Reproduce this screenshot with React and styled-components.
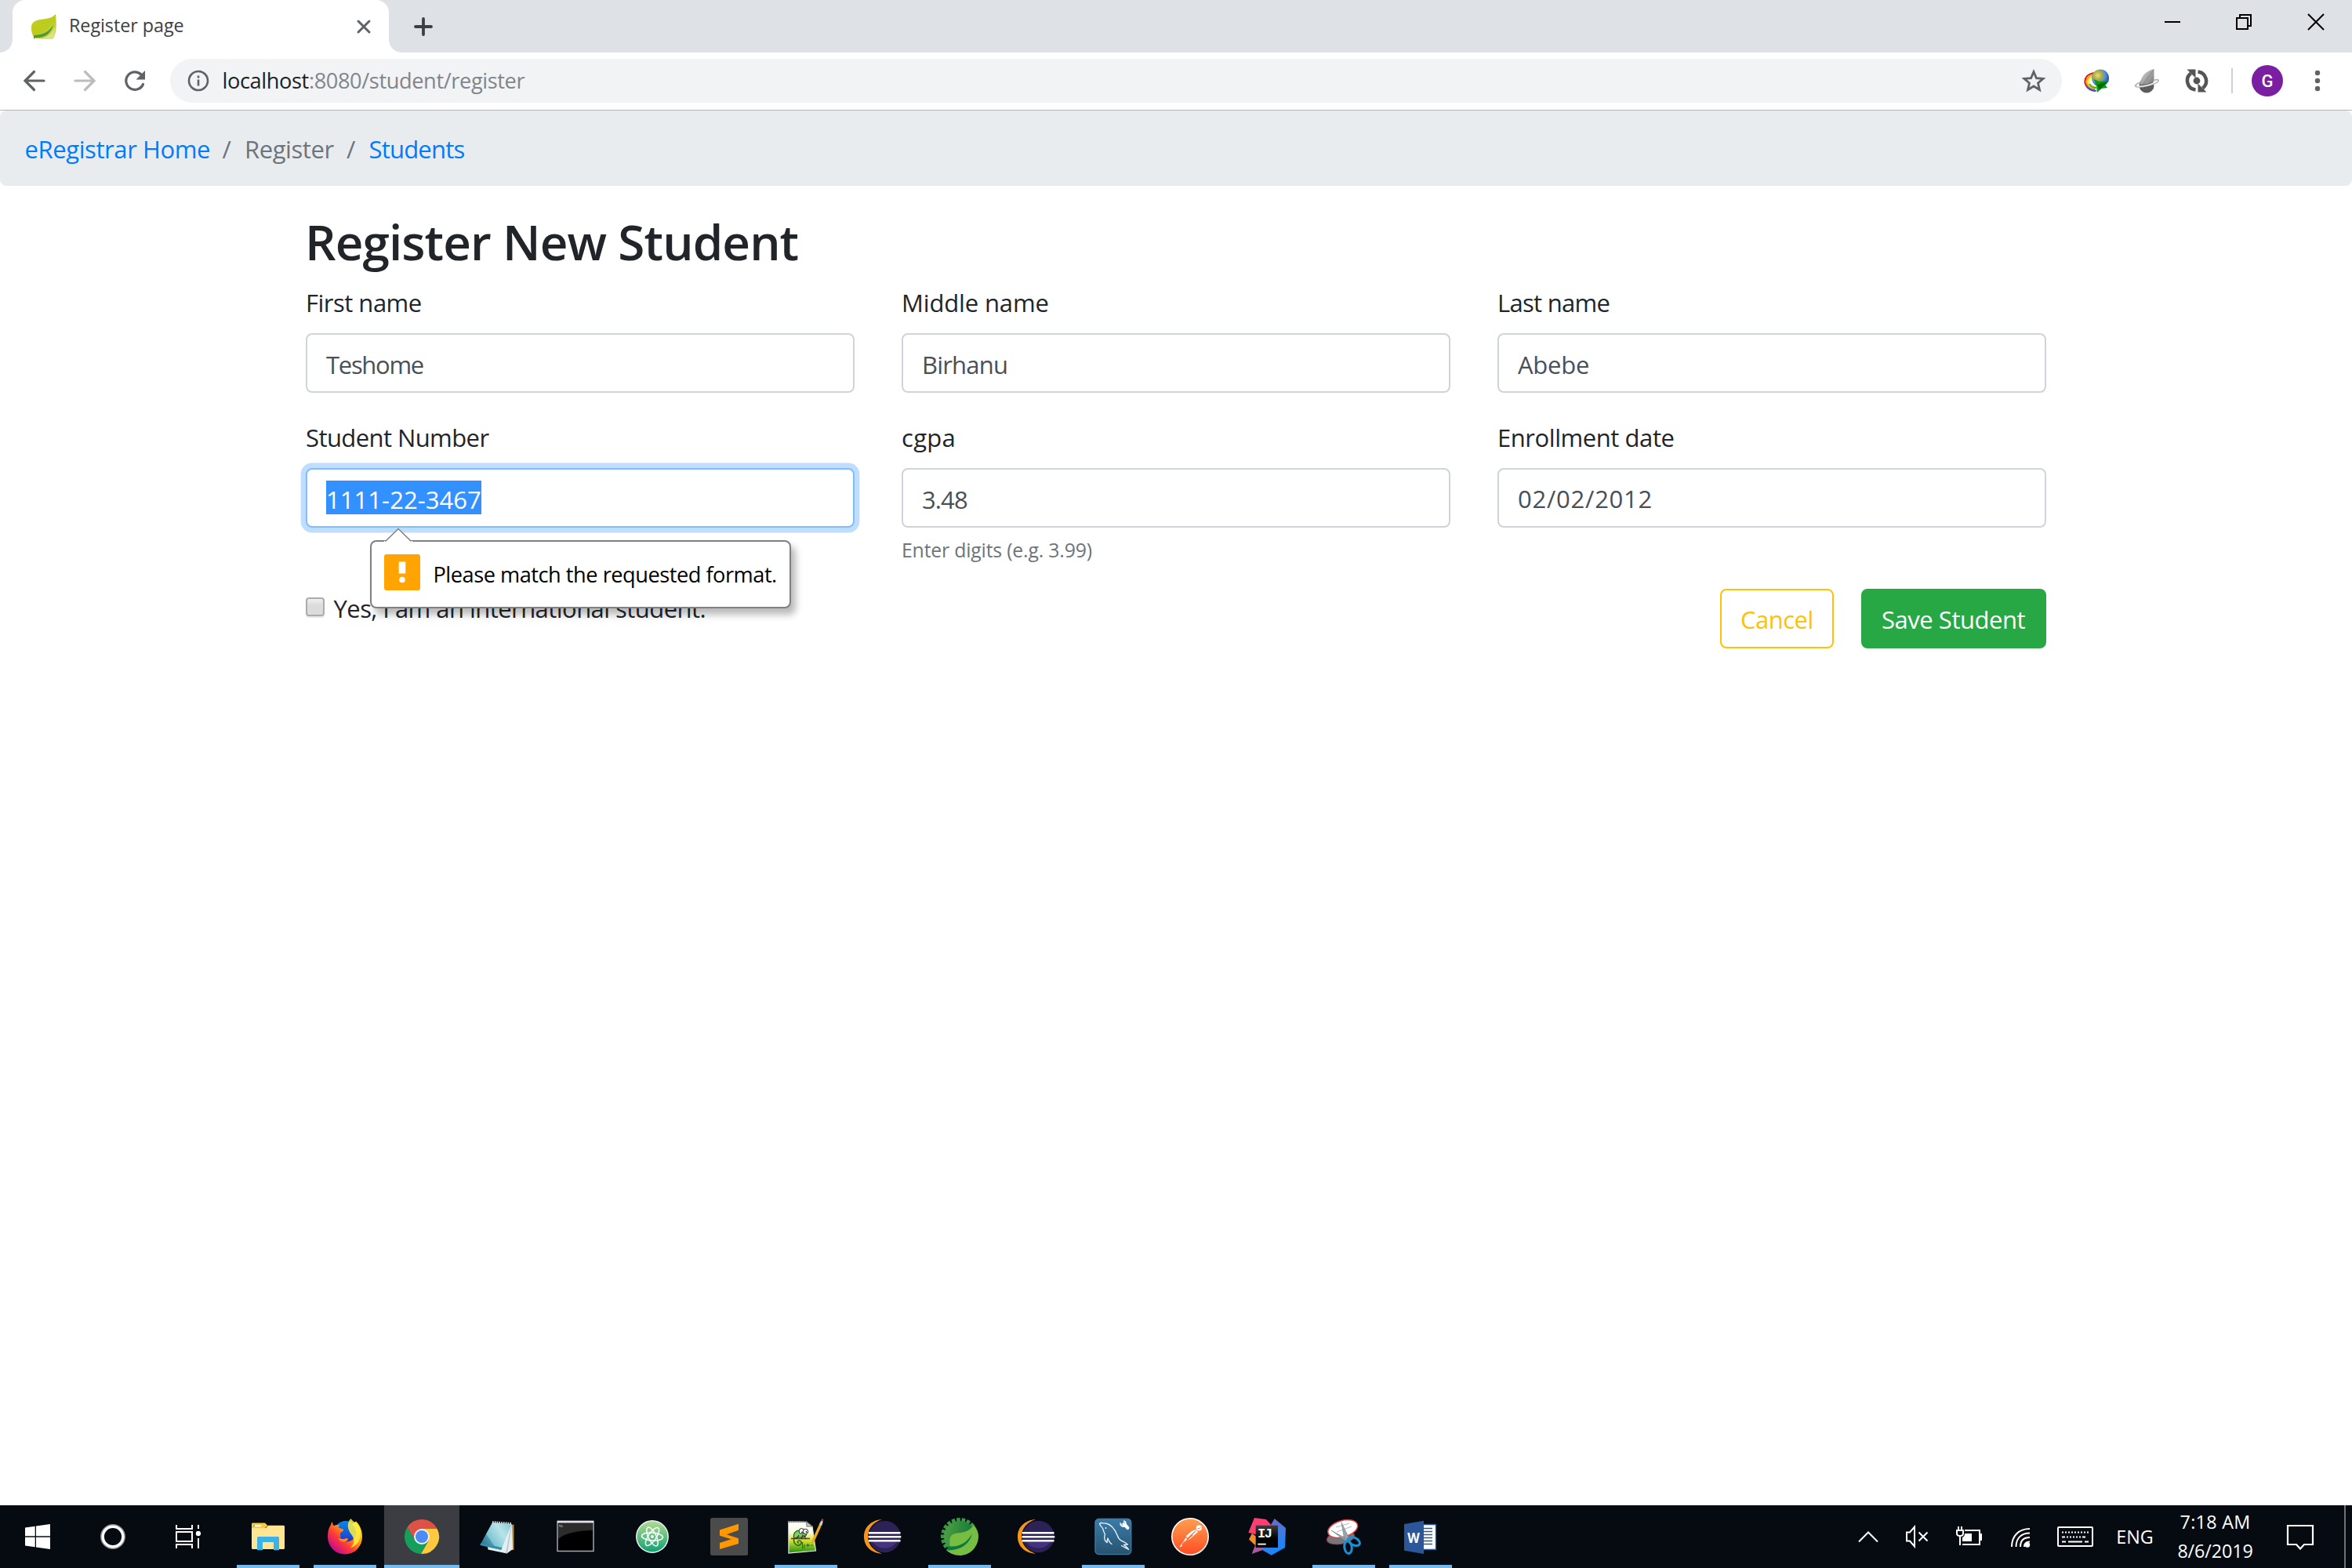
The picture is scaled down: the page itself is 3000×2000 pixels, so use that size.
import React from 'react';
import styled, { createGlobalStyle, css } from 'styled-components';

const GlobalStyle = createGlobalStyle`
  *, *::before, *::after { box-sizing: border-box; }
  body {
    margin: 0;
    background: #fff;
    font-family: "Open Sans", "Noto Sans", sans-serif;
    font-size: 31px;
    color: #212529;
  }
  svg { display: block; flex: none; }
`;

const tracking = css`letter-spacing: ${(p) => p.$ls || 0}px;`;

const Window = styled.div`
  width: 3000px;
  height: 2000px;
  display: flex;
  flex-direction: column;
  overflow: hidden;
  white-space: nowrap;
`;

/* ---------- tab strip ---------- */
const TabStrip = styled.header`
  display: flex;
  flex: none;
  height: 67px;
  padding-left: 16px;
  background: #dee1e6;
`;

const Tab = styled.div`
  position: relative;
  display: flex;
  align-items: center;
  width: 480px;
  height: 67px;
  padding: 0 22px 0 23px;
  background: #fff;
  border-radius: 16px 16px 0 0;
  &::before, &::after {
    content: "";
    position: absolute;
    bottom: 0;
    width: 16px;
    height: 16px;
  }
  &::before {
    left: -16px;
    background: radial-gradient(circle at 0 0, transparent 15.5px, #fff 16px);
  }
  &::after {
    right: -16px;
    background: radial-gradient(circle at 100% 0, transparent 15.5px, #fff 16px);
  }
`;

const TabTitle = styled.span`
  flex: 1;
  margin-left: 15px;
  padding-bottom: 3px;
  font-size: 23.3px;
  line-height: 30px;
  color: #3c4043;
  ${tracking}
`;

const NewTab = styled.div`
  display: flex;
  align-items: center;
  margin-left: 32px;
`;

const WindowControls = styled.div`
  display: flex;
  margin-left: auto;
`;

const ControlSlot = styled.div`
  display: flex;
  justify-content: center;
  width: 92px;
  padding-top: 16px;
`;

/* ---------- toolbar ---------- */
const Toolbar = styled.div`
  display: flex;
  flex: none;
  align-items: center;
  height: 74px;
  padding: 0 12px 1px 16px;
  background: #fff;
  border-bottom: 1px solid #b6b4b6;
`;

const ToolSlot = styled.div`
  display: flex;
  flex: none;
  align-items: center;
  justify-content: center;
  width: ${(p) => p.$w || 64}px;
`;

const Omnibox = styled.div`
  display: flex;
  flex: 1;
  align-items: center;
  height: 56px;
  margin: 0 12px 0 17px;
  padding: 0 20px 0 21.5px;
  background: #f1f3f4;
  border-radius: 28px;
`;

const Url = styled.span`
  flex: 1;
  margin-left: 17px;
  padding-bottom: 1px;
  font-size: 27.2px;
  line-height: 40px;
  color: #80868b;
  ${tracking}
`;

const Host = styled.span`color: #202124;`;

const Divider = styled.div`
  width: 2px;
  height: 32px;
  margin: 0 24px 0 12px;
  background: #cfd0d2;
`;

const Avatar = styled.div`
  width: 40px;
  height: 40px;
  margin-right: 12px;
  border-radius: 50%;
  background: #7b1fa2;
  color: #fff;
  font: 500 22px/41px Roboto, sans-serif;
  text-align: center;
`;

/* ---------- page ---------- */
const Page = styled.main`
  flex: 1;
  min-height: 0;
  background: #fff;
`;

const Breadcrumb = styled.nav`
  display: flex;
  align-items: center;
  height: 96px;
  padding: 2px 32px 0 31.5px;
  background: #e9ecef;
  border-radius: 8px;
`;

const Crumb = styled.span`
  width: ${(p) => p.$w}px;
  color: ${(p) => (p.$muted ? '#6c757d' : '#007bff')};
  ${tracking}
`;

const Slash = styled.span`
  width: 44.5px;
  padding-left: 16px;
  color: #6c757d;
`;

const Container = styled.div`
  width: 2220px;
  margin: 0 auto;
`;

const Heading = styled.h2`
  margin: 0 0 15px -1px;
  padding-top: 33px;
  font-size: 62px;
  font-weight: 600;
  line-height: 76px;
  ${tracking}
`;

const FormRow = styled.div`
  display: grid;
  grid-template-columns: repeat(3, 700px);
  column-gap: 60px;
  margin-bottom: 32px;
`;

const Group = styled.div`
  display: flex;
  flex-direction: column;
`;

const Label = styled.label`
  height: 64px;
  padding-top: 1px;
  line-height: 48px;
  ${tracking}
`;

const InputWrap = styled.div`position: relative;`;

const Input = styled.div`
  display: flex;
  align-items: center;
  height: 76px;
  padding: ${(p) => p.$top ?? 4}px 25px 0 24px;
  border: 2px solid ${(p) => (p.$focused ? '#80bdff' : '#ced4da')};
  border-radius: 8px;
  background: #fff;
  color: #495057;
  box-shadow: ${(p) => (p.$focused ? '0 0 0 6.4px rgba(0,123,255,.25)' : 'none')};
  ${tracking}
`;

const Selected = styled.span`
  width: 198px;
  height: 43px;
  margin-top: -6px;
  padding-top: 3px;
  background: #3390ff;
  color: #fff;
  line-height: 42px;
  ${tracking}
`;

const Hint = styled.small`
  height: 38px;
  margin-top: 8px;
  font-size: 24.8px;
  line-height: 40px;
  color: #6c757d;
  ${tracking}
`;

const Bubble = styled.div`
  position: absolute;
  z-index: 2;
  top: 92px;
  left: 82px;
  display: flex;
  align-items: center;
  width: 537px;
  height: 87px;
  padding: 0 16px;
  background: #fff;
  border: 2px solid #808080;
  border-radius: 8px;
  box-shadow: 6px 8px 10px rgba(0, 0, 0, .28);
  color: #000;
`;

const BubbleArrow = styled.svg`
  position: absolute;
  top: -18px;
  left: 16px;
`;

const WarningBadge = styled.div`
  display: flex;
  flex: none;
  justify-content: center;
  width: 46px;
  height: 46px;
  margin-bottom: 5px;
  border-radius: 3px;
  background: #ffa400;
`;

const BubbleText = styled.span`
  margin-left: 16.500px;
  font-size: 27.2px;
  line-height: 40px;
  ${tracking}
`;

const Actions = styled.div`
  display: flex;
  justify-content: space-between;
  align-items: flex-start;
`;

const CheckLabel = styled.label`
  display: flex;
  padding-top: 1px;
  line-height: 48px;
  ${tracking}
`;

const Checkbox = styled.span`
  width: 24px;
  height: 24px;
  margin: 10px 11.500px 0 0;
  border: 2px solid #acacac;
  border-radius: 4px;
  background: linear-gradient(#efefef, #dcdcdc 40%);
  box-shadow: 0 2px 1px rgba(0, 0, 0, .1);
`;

const Buttons = styled.div`
  display: flex;
  gap: 35px;
`;

const Button = styled.button`
  height: 76px;
  width: ${(p) => p.$w}px;
  padding: 2px 0 0 24px;
  border: 2px solid ${(p) => (p.$solid ? '#28a745' : '#ffc107')};
  border-radius: 8px;
  background: ${(p) => (p.$solid ? '#28a745' : 'transparent')};
  color: ${(p) => (p.$solid ? '#fff' : '#ffc107')};
  font: inherit;
  text-align: left;
  ${tracking}
`;

/* ---------- taskbar ---------- */
const Taskbar = styled.footer`
  display: flex;
  flex: none;
  height: 80px;
  background: #060b12;
  color: #fff;
`;

const SystemSlot = styled.div`
  display: flex;
  align-items: center;
  justify-content: center;
  width: 96px;
`;

const Apps = styled.div`
  display: flex;
  gap: 2px;
  padding-left: 6px;
`;

const AppSlot = styled.div`
  position: relative;
  display: flex;
  align-items: center;
  justify-content: center;
  width: 96px;
  background: ${(p) => (p.$active ? '#3b3d42' : 'transparent')};
  &::after {
    content: "";
    position: absolute;
    bottom: 0;
    left: ${(p) => (p.$active ? 0 : 8)}px;
    right: ${(p) => (p.$active ? 0 : 8)}px;
    height: 4px;
    background: ${(p) => (p.$active || p.$running ? '#76b9ed' : 'transparent')};
  }
`;

const Tray = styled.div`
  display: flex;
  align-items: center;
  margin-left: auto;
`;

const TraySlot = styled.div`
  display: flex;
  justify-content: center;
  width: ${(p) => p.$w}px;
  font-size: 23.3px;
`;

const Clock = styled.div`
  width: 133px;
  font-size: 23.3px;
  line-height: 37px;
  text-align: center;
`;

const ClockLine = styled.div`${tracking}`;

const ShowDesktop = styled.div`
  width: 10px;
  height: 80px;
  margin-left: 15px;
  border-left: 2px solid #6f7277;
`;

/* ---------- browser icons ---------- */
const LeafFavicon = () => (
  <svg width="34" height="34" viewBox="0 0 34 34">
    <defs>
      <linearGradient id="leaf" x1="0" y1="0" x2="1" y2="1">
        <stop offset="0" stopColor="#c4cf22" /><stop offset=".55" stopColor="#bccb1c" /><stop offset="1" stopColor="#d3da6a" />
      </linearGradient>
    </defs>
    <path d="M32 1 C33 12 34 24 29 32 H6 C3 30 1 24 1 20 C0 9 10 8 19 7 C26 6 29 4 32 1Z" fill="url(#leaf)" />
    <path d="M4 28 C15 28 25 23 29 14 C27 26 17 32 6 31 L4 33Z" fill="#4c9a3a" />
    <path d="M6 33 C16 33 26 29 31 18 C31 25 30 30 28 33Z" fill="#dce37e" />
  </svg>
);
const CloseTab = () => (
  <svg width="20" height="20" viewBox="0 0 20 20"><path d="M3 3 17 17M17 3 3 17" stroke="#5f6368" strokeWidth="3" strokeLinecap="round" /></svg>
);
const Plus = () => (
  <svg width="24" height="24" viewBox="0 0 24 24"><path d="M12 2V22M2 12H22" stroke="#3c4043" strokeWidth="3.8" strokeLinecap="round" /></svg>
);
const Arrow = ({ color, flip }) => (
  <svg width="32" height="32" viewBox="0 0 32 32">
    <path d={flip ? 'M4 16H27M16.5 4.500 28 16 16.5 27.500' : 'M28 16H5M15.500 4.500 4 16 15.500 27.500'} fill="none" stroke={color} strokeWidth="3.200" strokeLinecap="round" />
  </svg>
);
const Reload = () => (
  <svg width="32" height="32" viewBox="0 0 32 32">
    <path d="M26.500 20.500A11.300 11.300 0 1 1 24 8" fill="none" stroke="#5f6368" strokeWidth="3.200" strokeLinecap="round" />
    <path d="M29 3V14.500H17.500Z" fill="#5f6368" />
  </svg>
);
const Info = () => (
  <svg width="28" height="28" viewBox="0 0 28 28">
    <circle cx="14" cy="14" r="12" fill="none" stroke="#5f6368" strokeWidth="2.600" />
    <path d="M12.700 7.500h2.600v3h-2.600zM12.700 12.500h2.600v8h-2.600z" fill="#5f6368" />
  </svg>
);
const Star = () => (
  <svg width="32" height="32" viewBox="0 0 32 32">
    <path d="M16 4.500 19.400 12.600 28.100 13.300 21.500 19 23.500 27.500 16 23 8.500 27.500 10.500 19 3.900 13.300 12.600 12.600Z" fill="none" stroke="#5f6368" strokeWidth="2.800" />
  </svg>
);
const GlobeDownload = () => (
  <svg width="32" height="32" viewBox="0 0 32 32">
    <defs>
      <radialGradient id="globe" cx=".35" cy=".35" r=".7">
        <stop offset="0" stopColor="#e6df78" /><stop offset=".4" stopColor="#a4a83c" /><stop offset=".6" stopColor="#5a94df" /><stop offset="1" stopColor="#164a9c" />
      </radialGradient>
    </defs>
    <g fill="none" strokeWidth="2.200">
      <path d="M14 6C5 7 1 12 1.500 18 2 24 8 28 14 28" stroke="#e01a10" />
      <path d="M14 8C7 9 3.200 13 3.500 18 4 23 9 26 14 26" stroke="#ff9a10" />
      <path d="M14 10C9 10 5.300 14 5.500 18 6 22 10 24 15 24" stroke="#f5ec20" />
      <path d="M3 22C6 27 11 29.500 16 28.500" stroke="#3158e0" />
      <path d="M7 20C9 23 12 25 16 25" stroke="#39b53a" />
    </g>
    <circle cx="21" cy="12.500" r="11" fill="url(#globe)" />
    <path d="M13 14 19 17 32 16 27 21 30 25 22 26 17 31 16 22Z" fill="#089b12" />
    <path d="M17 21 30 17 20 28Z" fill="#056a0a" />
  </svg>
);
const RocketOrbit = () => (
  <svg width="32" height="32" viewBox="0 0 32 32">
    <defs>
      <linearGradient id="sail" x1="0" y1="0" x2="1" y2="1"><stop offset="0" stopColor="#d8d8d8" /><stop offset="1" stopColor="#777" /></linearGradient>
    </defs>
    <circle cx="16" cy="22" r="9.500" fill="#5c5c5c" />
    <path d="M25.500 1 C15 4 8 10 8 21 L17 20 25.500 17Z" fill="url(#sail)" />
    <path d="M25 2 12 20" stroke="#8a8a8a" strokeWidth="1.200" />
    <path d="M8 18C2 20 0 23 3 23.500 10 25 29 20 31 16 31.500 14.500 29 14.500 26 15" fill="none" stroke="#b5b5b5" strokeWidth="1.800" />
    <path d="M4 23C12 24 25 20 30 16" fill="none" stroke="#f4f4f4" strokeWidth="1.200" />
  </svg>
);
const SyncTarget = () => (
  <svg width="30" height="32" viewBox="0 0 30 32">
    <path d="M7.500 6.500A11.800 11.800 0 0 0 13.500 27.500M16.500 4.500A11.800 11.800 0 0 1 22.500 25.500" fill="none" stroke="#555" strokeWidth="4.500" />
    <path d="M2.500 1.500H13.500V12.500ZM27.500 30.500H16.500V19.500Z" fill="#555" />
    <circle cx="15" cy="16" r="4.400" fill="#555" />
  </svg>
);
const Dots = () => (
  <svg width="8" height="28" viewBox="0 0 8 28" fill="#5f6368"><circle cx="4" cy="4" r="3.200" /><circle cx="4" cy="14" r="3.200" /><circle cx="4" cy="24" r="3.200" /></svg>
);
const WinIcon = ({ d }) => (
  <svg width="24" height="24" viewBox="0 0 24 24"><path d={d} fill="none" stroke="#000" strokeWidth="2" /></svg>
);

/* ---------- taskbar icons ---------- */
const Icon48 = ({ children }) => <svg width="48" height="48" viewBox="0 0 48 48">{children}</svg>;

const Start = () => (
  <Icon48><path d="M8 12.500 20.700 10.700V23.300H8ZM22 10.500 40 8V23.300H22ZM8 24.700H20.700V37.300L8 35.500ZM22 24.700H40V40L22 37.500Z" fill="#fff" /></Icon48>
);
const Cortana = () => (
  <Icon48><circle cx="24" cy="24" r="14.700" fill="none" stroke="#8c8f93" strokeWidth="2.600" /><circle cx="24" cy="24" r="12.800" fill="none" stroke="#fff" strokeWidth="3.400" /></Icon48>
);
const TaskView = () => (
  <Icon48>
    <path d="M9 9V14H29V9M9 18H29V30H9ZM9 39V34H29V39M37 9V14M37 26V39" fill="none" stroke="#fff" strokeWidth="2" />
    <circle cx="37" cy="20" r="3.200" fill="#fff" />
  </Icon48>
);
const Explorer = () => (
  <Icon48>
    <path d="M3 13H21L24 9.700H43.500Q45 9.700 45 11V38.500Q45 40 43.500 40H4.500Q3 40 3 38.500Z" fill="#ffe694" />
    <path d="M3 7.500Q3 6.500 4 6.500H20L23.500 10 20 13H3Z" fill="#fdc93b" />
    <path d="M5 9.200H15V11.200H5Z" fill="#fff" /><path d="M5 9.200H7V11.200H5Z" fill="#3bb3e8" />
    <path d="M10 41.300V25.500Q10 24 11.500 24H36.500Q38 24 38 25.500V41.300H31V31H17V41.300Z" fill="#3bb3e8" />
  </Icon48>
);
const Firefox = () => (
  <Icon48>
    <defs>
      <linearGradient id="ffBody" x1=".85" y1=".1" x2=".15" y2=".85"><stop offset="0" stopColor="#ffe226" /><stop offset=".35" stopColor="#ff9a0a" /><stop offset=".65" stopColor="#ff3a3a" /><stop offset="1" stopColor="#c60a8e" /></linearGradient>
      <linearGradient id="ffGlobe" x1=".5" y1="0" x2=".5" y2="1"><stop offset="0" stopColor="#0a84e8" /><stop offset=".6" stopColor="#1b4fd6" /><stop offset="1" stopColor="#3a1590" /></linearGradient>
    </defs>
    <circle cx="25" cy="20" r="16" fill="url(#ffGlobe)" />
    <path d="M2 24C2 17 3.500 12 6 9 6.500 6.500 7 6 8 5 8 7.500 8.500 9 10 10 13 8.500 16 9 17.500 9.500 15.500 11 15.500 12 16.500 13 19 14 22 14 22 15.500 22 18 18.500 18 18 20 17.500 22 19 23 18 24.500 17 28 20.500 31 25 30.500 31 31 37 27 38 21 39 17 37 12 33 8L38 4.500C43 9 46 16 46 24A22 22 0 0 1 24 46.500 22 22 0 0 1 2 24Z" fill="url(#ffBody)" />
    <path d="M31.500 1C34 5 42 8 43.500 17 45 27 40 36 31 38 37 33 36 26 32 21 27 15 26 6 31.500 1Z" fill="#fff044" opacity=".85" />
    <path d="M16 26C19 26 21 28 24 26.500 26 25.500 28 26 28 27.500 27 30 24 31 21 30.500 18 30 16 28 16 26Z" fill="#ff8a16" />
  </Icon48>
);
const Chrome = () => (
  <Icon48>
    <path d="M24 24 15.340 29 5.540 12.030A22 22 0 0 1 43.600 14L24 14Z" fill="#de5145" />
    <path d="M24 14H43.600A22 22 0 0 1 22.860 45.970L32.660 29 24 24Z" fill="#fdc93f" />
    <path d="M24 24 15.340 29 5.540 12.030A22 22 0 0 0 22.860 45.970L32.660 29Z" fill="#159f5b" />
    <circle cx="24" cy="24" r="10" fill="#f1f1f1" /><circle cx="24" cy="24" r="8" fill="#4c8bf5" />
  </Icon48>
);
const Notepad = () => (
  <Icon48>
    <defs><linearGradient id="np" x1="0" y1=".8" x2="1" y2=".2"><stop offset="0" stopColor="#1f6f86" /><stop offset=".3" stopColor="#4f9bb0" /><stop offset=".32" stopColor="#7fc4d2" /><stop offset=".7" stopColor="#b7e4ea" /><stop offset="1" stopColor="#8fcbd8" /></linearGradient></defs>
    <path d="M40 9 43.500 8.500V41H38Z" fill="#b38a42" />
    <path d="M10 37 41 8 42 40 34.500 45.500 10.500 40.500Z" fill="#e6eef0" />
    <path d="M41 8 35 45.500 33 45 40 10Z" fill="#b9c7cb" />
    <path d="M16 6 40.700 8 27.300 41 .3 34.700Z" fill="url(#np)" />
    <path d="M.3 34.700 27.300 41 28.500 38 1.500 32.200Z" fill="#3292ab" />
    <path d="M16 5.500 41 7.500" stroke="#d9dcde" strokeWidth="3" strokeDasharray="1.600 1.200" />
  </Icon48>
);
const Cmd = () => (
  <Icon48>
    <path d="M1 4.500H47V42.500H1Z" fill="#000" stroke="#a4a5ae" strokeWidth="1.500" />
    <path d="M2 7H46V16C26 16 10 20 2 27Z" fill="#2c2c2c" />
    <path d="M1 3.800H47V6.600H1Z" fill="#e4e4ea" />
    <path d="M3 9.500H5M6 9.500H7M3.500 11H8" stroke="#bbb" strokeWidth=".8" />
  </Icon48>
);
const Atom = () => (
  <Icon48>
    <defs><linearGradient id="atom" x1="0" y1="0" x2="0" y2="1"><stop offset="0" stopColor="#b4dd90" /><stop offset="1" stopColor="#0f9f72" /></linearGradient></defs>
    <circle cx="24" cy="24" r="20.200" fill="url(#atom)" stroke="#e9f4ee" strokeWidth="1.500" />
    <g fill="none" stroke="#fff" strokeWidth="1.500">
      <ellipse cx="24" cy="24" rx="13.500" ry="5" transform="rotate(4 24 24)" />
      <ellipse cx="24" cy="24" rx="13" ry="5" transform="rotate(64 24 24)" />
      <ellipse cx="24" cy="24" rx="13.500" ry="5" transform="rotate(124 24 24)" />
    </g>
    <circle cx="24" cy="24" r="1.900" fill="#fff" />
  </Icon48>
);
const Sublime = () => (
  <Icon48>
    <rect width="48" height="48" rx="2.500" fill="#4b4b4b" />
    <path d="M12 15.500 36 7.700V15.700L20.700 21.300 36 26.300V33L12 40V32L26.700 27.300 12 22.700Z" fill="#ff9800" />
  </Icon48>
);
const NotepadPP = () => (
  <Icon48>
    <defs><linearGradient id="npp" x1="0" y1="0" x2="0" y2="1"><stop offset="0" stopColor="#fff" /><stop offset=".35" stopColor="#f8fbe0" /><stop offset=".6" stopColor="#d3e32c" /><stop offset="1" stopColor="#1d8f12" /></linearGradient></defs>
    <path d="M1.800 4.500 24.500 5 32 11 36.500 42 2 45Z" fill="url(#npp)" stroke="#e8e8e8" strokeWidth="1.200" />
    <path d="M24.500 5 25 11 32 11Z" fill="#c8cacc" stroke="#444" strokeWidth=".7" />
    <path d="M2 5H24" stroke="#222" strokeWidth="2" strokeDasharray="1.200 1.300" />
    <path d="M8.500 25C7.500 17 15 14.500 20 17 26 19 25 24 21 24.500 16 26 14 23.500 10.500 26Z" fill="#7dd35f" stroke="#1f5522" strokeWidth="1.200" />
    <path d="M9 26C7 33 13 37 17 34 20 31 16 27.500 13.500 30 13 32 14.500 32.500 15 31.500" fill="none" stroke="#2f6b25" strokeWidth="1.600" />
    <path d="M5 26.500H29" stroke="#6b3a26" strokeWidth="1.600" />
    <path d="M12 27 15 22M18 27 20 22M24 27 21 22" stroke="#1f3b1a" strokeWidth="1.200" />
    <circle cx="18.500" cy="17" r="3.400" fill="#fff" stroke="#222" /><circle cx="23.500" cy="17.500" r="3.200" fill="#fff" stroke="#222" />
    <circle cx="19" cy="18.500" r=".9" fill="#111" /><circle cx="24.500" cy="18" r=".9" fill="#111" />
    <path d="M19.500 31V39.500M22 34V39M24 35H29M26.500 33V37M30 35H33" stroke="#256c1c" strokeWidth="1.200" />
    <path d="M30.500 35 31.500 29 42 6 45 7.500 34.500 30.500Z" fill="#f0ab1d" />
    <path d="M41 8.500 43.300 3.500 46 4.500 44.200 9.700Z" fill="#c9ced2" /><path d="M43.300 3.700 44.300 1 46.500 2 45.800 4.700Z" fill="#a8383c" />
  </Icon48>
);
const Eclipse = () => (
  <Icon48>
    <path d="M23 2C9 3 0 12 0 24S9 45 23 45.700C12 42 5 34 5 24S12 5.500 23 2Z" fill="#f7941e" />
    <circle cx="26.500" cy="24" r="20.300" fill="#2c2255" />
    <path d="M11 30H42C39 36 33 38.500 26.500 38.500S14 36 11 30Z" fill="#453382" />
    <path d="M5.700 18H46.500V20.500H5.700ZM5.500 23H47.300V25.500H5.500ZM5.700 28H46.500V30.500H5.700Z" fill="#fff" />
  </Icon48>
);
const teeth = Array.from({ length: 12 }, (_, i) => 130 + i * 17);
const Spring = () => (
  <Icon48>
    <defs><linearGradient id="gear" x1="0" y1=".3" x2="1" y2=".5"><stop offset="0" stopColor="#4fa046" /><stop offset=".5" stopColor="#2d8a3c" /><stop offset="1" stopColor="#0b7a3c" /></linearGradient></defs>
    <g fill="#3d9642">{teeth.map((a) => <rect key={a} x="41" y="21.700" width="7" height="4.600" transform={`rotate(${a} 24 24)`} />)}</g>
    <circle cx="24" cy="24" r="20" fill="url(#gear)" />
    <path d="M42 9C47 15 48.300 20 48 25 47 38 37 48 24 48 17 48 11 45 7 41L11.500 36C10 20 16 20 25 19 33 18 38 15 42 9Z" fill="#77bd43" />
    <path d="M8.500 38.500C11 36 11.500 35 12 36.500 25 37 34 31 40 20 37 33 26 41 10 41.500L7 41Z" fill="#0b7a3c" />
  </Icon48>
);
const MySql = () => (
  <Icon48>
    <defs><linearGradient id="sql" x1="0" y1="0" x2="0" y2="1"><stop offset="0" stopColor="#3b7ba9" /><stop offset="1" stopColor="#27536f" /></linearGradient></defs>
    <rect x=".9" y="1.200" width="46" height="45.500" rx="4.500" fill="url(#sql)" stroke="#4c89b3" />
    <path d="M22 33.500C19 31.500 18 29 17 26 16 28 16.500 30 16 31.500 12.500 29 12 25 13.500 21 12 19 11.500 16 10.500 13.500 9 11 6 9 6.700 7 9 5.500 12 7.500 15.500 7.300 22 9 26 15 29 22 30 25 31.500 27.500 34 29 37 30.500 40 31.500 42.300 34L37.500 34.500C40 36.500 42.500 38 43.500 40.500 40 38.500 37.500 37.500 34.500 35.500" fill="none" stroke="#e4eef5" strokeWidth="1.400" strokeLinejoin="round" strokeLinecap="round" />
    <circle cx="14.500" cy="13" r=".9" fill="#fff" />
    <path d="M36 7 42 12.500" stroke="#fff" strokeWidth="3.200" /><path d="M33.500 6.500A3.300 3.300 0 1 0 37 4.300" fill="none" stroke="#fff" strokeWidth="2" /><path d="M40 10 42.300 12.800" stroke="#fff" strokeWidth="4.200" strokeLinecap="round" />
  </Icon48>
);
const Postman = () => (
  <Icon48>
    <defs><linearGradient id="pm" x1="0" y1="0" x2="0" y2="1"><stop offset="0" stopColor="#ff9f50" /><stop offset="1" stopColor="#ff4d22" /></linearGradient></defs>
    <circle cx="24" cy="24" r="23.200" fill="url(#pm)" stroke="#fff" strokeWidth="1.600" />
    <circle cx="35.300" cy="12.800" r="3.600" fill="#fff" /><path d="M33.500 13.500A3 3 0 0 0 37.500 12" fill="none" stroke="#ff7a3c" strokeWidth="1" />
    <path d="M31 15 34 18 24 27 17 30 14 33 13 37 10.500 37 15 31 18 26 19 23 26 17Z" fill="#fff" />
    <path d="M20 27 31 17M19 29 27 22M18 24 22 28" stroke="#ff7038" strokeWidth="1.100" />
  </Icon48>
);
const IntelliJ = () => (
  <Icon48>
    <defs>
      <linearGradient id="ijBlue" x1="0" y1="0" x2=".4" y2="1"><stop offset="0" stopColor="#7a60c0" /><stop offset=".5" stopColor="#4a78dc" /><stop offset="1" stopColor="#1687f8" /></linearGradient>
      <linearGradient id="ijBox" x1="0" y1="0" x2="0" y2="1"><stop offset="0" stopColor="#3c3c3c" /><stop offset=".6" stopColor="#000" /></linearGradient>
    </defs>
    <path d="M5 20 1 27.500 9 35 16 28Z" fill="#f28c2d" />
    <path d="M10 32 4.700 46 30 37 20 28Z" fill="#a95a9c" />
    <path d="M8 0 23 2 31 11 20 24 .3 18.700Z" fill="#fe3d73" />
    <path d="M33.700 1 48 13 47 38 29.700 47.700 18 41 26 14Z" fill="url(#ijBlue)" />
    <path d="M9.700 9.700H38V38H9.700Z" fill="url(#ijBox)" />
    <text x="12" y="25" fill="#fff" fontFamily="Liberation Mono, monospace" fontWeight="700" fontSize="17" letterSpacing="-1.500">IJ</text>
    <path d="M12.300 32.700H22.700V34.500H12.300Z" fill="#fff" />
  </Icon48>
);
const Snip = () => (
  <Icon48>
    <ellipse cx="20" cy="25.500" rx="18" ry="8" transform="rotate(-10 20 25.500)" fill="#75777b" stroke="#8d2a33" strokeWidth="1" />
    <ellipse cx="22.700" cy="14" rx="19.500" ry="10.500" transform="rotate(-16 22.700 14)" fill="#fff" stroke="#e03a3c" strokeWidth="1.500" />
    <path d="M14 12 31 7M15 18 34 11" stroke="#b9bcbf" strokeWidth="1.200" />
    <path d="M8 16 30 28 27 30ZM21 6 31 26 25 29Z" fill="#9aa3ab" stroke="#77808a" strokeWidth=".6" />
    <g fill="none" stroke="#1c8fd2" strokeWidth="3"><ellipse cx="37" cy="30" rx="8" ry="4.700" transform="rotate(28 37 30)" /><ellipse cx="29.500" cy="37.500" rx="4.700" ry="8" transform="rotate(-8 29.500 37.500)" /></g>
  </Icon48>
);
const Word = () => (
  <Icon48>
    <path d="M27 8.500H43.500V40.500H27Z" fill="#fff" stroke="#2b569a" strokeWidth="1.400" />
    <path d="M28 13.500H39M28 17.500H39M28 21.500H39M28 25.500H39M28 29.500H39M28 33.500H39" stroke="#2b569a" strokeWidth="1.600" />
    <path d="M3 8 28 3.700V46L3 41.700Z" fill="#2b569a" />
    <text x="7.300" y="32" fill="#fff" fontFamily="Open Sans, sans-serif" fontWeight="700" fontSize="18" textLength="15.500" lengthAdjust="spacingAndGlyphs">W</text>
  </Icon48>
);

const Chevron = () => <svg width="28" height="18" viewBox="0 0 28 18"><path d="M2 15.500 14 3.500 26 15.500" fill="none" stroke="#fff" strokeWidth="2" /></svg>;
const Muted = () => <svg width="30" height="30" viewBox="0 0 30 30" fill="none" stroke="#fff" strokeWidth="2"><path d="M2 9.500H6L12 2.500V27.500L6 20.500H2ZM17.500 9.500 28.500 20.500M28.500 9.500 17.500 20.500" /></svg>;
const Battery = () => (
  <svg width="34" height="30" viewBox="0 0 34 30" fill="none" stroke="#fff" strokeWidth="2">
    <path d="M12 7H31V25H9M31 12H33V20M4 2V6M8 2V6M2 7H10V11Q10 14 6 14 2 14 2 11ZM6 14V26" /><path d="M12 11H21V21H9V16Q12 15 12 11Z" fill="#fff" stroke="none" />
  </svg>
);
const Wifi = () => (
  <svg width="26" height="28" viewBox="0 0 26 28" fill="none" stroke="#fff" strokeWidth="2">
    <path d="M2 27C2 13 11 4 25 4M7.500 27C7.500 16 14 9.500 25 9.500M13 27C13 19 17 15 25 15" /><path d="M18 27C18 23 20 20.500 25 20.500" /><circle cx="22" cy="24.500" r="3.200" fill="#fff" stroke="none" />
  </svg>
);
const Keyboard = () => (
  <svg width="48" height="28" viewBox="0 0 48 28" fill="none" stroke="#fff" strokeWidth="2">
    <rect x="2" y="2" width="44" height="24" rx="1" /><path d="M7 8.500H41" strokeDasharray="2 2" /><path d="M7 14.500H41" strokeDasharray="4 2 2 2 2 2 2 2 2 2 2 2 4" /><path d="M7 20.500H12M15 20.500H33M36 20.500H41" />
  </svg>
);
const Notification = () => <svg width="36" height="34" viewBox="0 0 36 34"><path d="M2 3H34V27H23L18 32.500 13 27H2Z" fill="none" stroke="#fff" strokeWidth="2.200" /></svg>;

const apps = [
  { name: 'explorer', Icon: Explorer, running: true },
  { name: 'firefox', Icon: Firefox, running: true },
  { name: 'chrome', Icon: Chrome, active: true },
  { name: 'notepad', Icon: Notepad },
  { name: 'cmd', Icon: Cmd },
  { name: 'atom', Icon: Atom },
  { name: 'sublime', Icon: Sublime },
  { name: 'notepadpp', Icon: NotepadPP, running: true },
  { name: 'eclipse', Icon: Eclipse },
  { name: 'spring', Icon: Spring, running: true },
  { name: 'eclipse-2', Icon: Eclipse },
  { name: 'mysql', Icon: MySql, running: true },
  { name: 'postman', Icon: Postman },
  { name: 'intellij', Icon: IntelliJ },
  { name: 'snip', Icon: Snip, running: true },
  { name: 'word', Icon: Word, running: true },
];

const Field = ({ label, labelLs, value, ls, top, hint }) => (
  <Group>
    <Label $ls={labelLs}>{label}</Label>
    <Input $ls={ls} $top={top}>{value}</Input>
    {hint && <Hint $ls={-0.18}>{hint}</Hint>}
  </Group>
);

export default function App() {
  return (
    <Window>
      <GlobalStyle />
      <TabStrip>
        <Tab>
          <LeafFavicon />
          <TabTitle $ls={-0.03}>Register page</TabTitle>
          <CloseTab />
        </Tab>
        <NewTab><Plus /></NewTab>
        <WindowControls>
          <ControlSlot><WinIcon d="M3 12H23" /></ControlSlot>
          <ControlSlot><WinIcon d="M3 7H17V21H3ZM7 7V3H21V17H17" /></ControlSlot>
          <ControlSlot><WinIcon d="M2 2 22 22M22 2 2 22" /></ControlSlot>
        </WindowControls>
      </TabStrip>

      <Toolbar>
        <ToolSlot $w={56}><Arrow color="#5f6368" /></ToolSlot>
        <ToolSlot $w={72}><Arrow color="#babcbe" flip /></ToolSlot>
        <ToolSlot $w={56}><Reload /></ToolSlot>
        <Omnibox>
          <Info />
          <Url $ls={-0.39}><Host>localhost</Host>:8080/student/register</Url>
          <Star />
        </Omnibox>
        <ToolSlot><GlobeDownload /></ToolSlot>
        <ToolSlot><RocketOrbit /></ToolSlot>
        <ToolSlot><SyncTarget /></ToolSlot>
        <Divider />
        <Avatar>G</Avatar>
        <ToolSlot><Dots /></ToolSlot>
      </Toolbar>

      <Page>
        <Breadcrumb>
          <Crumb $w={236} $ls={-0.41}>eRegistrar Home</Crumb>
          <Slash>/</Slash>
          <Crumb $muted $w={114} $ls={-0.42}>Register</Crumb>
          <Slash>/</Slash>
          <Crumb $w={124} $ls={-0.8}>Students</Crumb>
        </Breadcrumb>
        <Container>
          <Heading $ls={-0.91}>Register New Student</Heading>
          <FormRow>
            <Field label="First name" labelLs={-0.5} value="Teshome" ls={-1.3} />
            <Field label="Middle name" labelLs={-0.14} value="Birhanu" ls={-0.8} />
            <Field label="Last name" labelLs={-0.7} value="Abebe" ls={-0.24} />
          </FormRow>
          <FormRow>
            <Group>
              <Label $ls={-0.58}>Student Number</Label>
              <InputWrap>
                <Input $focused><Selected $ls={0.05}>1111-22-3467</Selected></Input>
                <Bubble>
                  <BubbleArrow width="36" height="20" viewBox="0 0 36 20">
                    <path d="M0 20V17H2L18 1.500 34 17H36V20Z" fill="#fff" />
                    <path d="M1.500 17.500 18 1.500 34.500 17.500" fill="none" stroke="#808080" strokeWidth="1.600" />
                  </BubbleArrow>
                  <WarningBadge>
                    <svg width="46" height="46" viewBox="0 0 46 46" fill="#fff"><path d="M18.700 9.500H27.300V24.500H18.700Z" /><circle cx="23" cy="32.500" r="3.800" /></svg>
                  </WarningBadge>
                  <BubbleText $ls={-0.48}>Please match the requested format.</BubbleText>
                </Bubble>
              </InputWrap>
            </Group>
            <Field label="cgpa" labelLs={0.3} value="3.48" ls={-0.9} hint="Enter digits (e.g. 3.99)" />
            <Field label="Enrollment date" labelLs={-0.44} value="02/02/2012" ls={0.75} top={2} />
          </FormRow>
          <Actions>
            <CheckLabel $ls={-0.55}><Checkbox />Yes, I am an international student.</CheckLabel>
            <Buttons>
              <Button $w={145} $ls={-0.52}>Cancel</Button>
              <Button $w={236} $ls={-0.46} $solid>Save Student</Button>
            </Buttons>
          </Actions>
        </Container>
      </Page>

      <Taskbar>
        <SystemSlot><Start /></SystemSlot>
        <SystemSlot><Cortana /></SystemSlot>
        <SystemSlot><TaskView /></SystemSlot>
        <Apps>
          {apps.map(({ name, Icon, running, active }) => (
            <AppSlot key={name} $running={running} $active={active}><Icon /></AppSlot>
          ))}
        </Apps>
        <Tray>
          <TraySlot $w={64}><Chevron /></TraySlot>
          <TraySlot $w={60}><Muted /></TraySlot>
          <TraySlot $w={72}><Battery /></TraySlot>
          <TraySlot $w={60}><Wifi /></TraySlot>
          <TraySlot $w={80}><Keyboard /></TraySlot>
          <TraySlot $w={72}>ENG</TraySlot>
          <Clock>
            <ClockLine $ls={0.28}>7:18 AM</ClockLine>
            <ClockLine $ls={-0.1}>8/6/2019</ClockLine>
          </Clock>
          <TraySlot $w={83}><Notification /></TraySlot>
          <ShowDesktop />
        </Tray>
      </Taskbar>
    </Window>
  );
}
